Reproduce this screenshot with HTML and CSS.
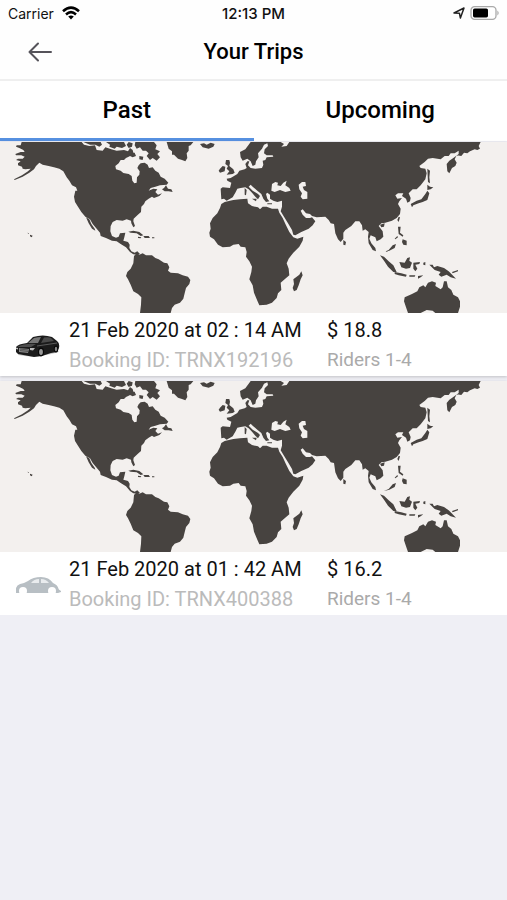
FILE: index.html
```
<!DOCTYPE html>
<html lang="en">
<head>
    <meta charset="UTF-8">
    <meta name="viewport" content="width=device-width, initial-scale=1.0">
    <title>Your Trips</title>
    <link rel="stylesheet" href="styles.css">
</head>
<body>
    <!-- Shared world map, used by every trip card -->
    <svg class="sprite" aria-hidden="true">
        <symbol id="world-map" viewBox="0 12 1521 513" preserveAspectRatio="none">
            <g class="land">
                <!-- North and Central America -->
                <path d="M65 12H245L252 20 268 24 285 22 290 36 308 38 316 28 334 34 350 38 372 36 384 40 390 30 398 36 401 48 386 56 378 60 372 66 362 66 356 76 346 84 348 94 362 98 370 105 386 108 395 114 397 128 403 136 410 134 411 118 418 110 419 100 412 90 416 82 422 76 434 74 443 80 447 90 458 88 466 98 476 104 482 116 494 122 505 134 500 140 480 142 466 146 452 150 446 158 460 152 472 154 466 162 474 170 486 166 478 174 462 180 456 176 446 182 436 190 432 198 424 206 423 222 412 232 401 242 400 250 405 264 400 268 394 256 393 248 380 244 368 248 350 246 338 252 332 264 331 280 336 294 348 299 356 296 360 286 376 284 373 298 370 308 384 312 389 320 388 330 394 340 404 344 412 340 420 348 414 350 400 349 390 342 378 328 362 318 350 310 336 308 318 300 302 294 300 284 290 272 278 258 270 244 256 236 244 222 234 206 225 192 222 176 226 158 232 158 228 148 216 142 208 128 200 118 190 100 178 92 162 88 146 84 128 80 118 74 108 84 102 94 88 104 68 116 44 126 42 124 66 112 84 100 92 92 76 94 68 92 66 86 54 82 54 76 62 70 48 66 54 62 68 62 74 56 64 52 48 52 46 48 62 42 74 42 70 36 58 30 48 26 50 22 62 22Z"/>
                <path d="M258 238L268 244 274 258 284 272 286 278 276 272 266 256Z"/>
                <path d="M492 150L498 142 504 152 514 154 518 162 506 160 494 160 486 154Z"/>
                <!-- Arctic islands -->
                <path d="M250 12H302L306 20 298 26 286 20 270 20ZM318 12H372L378 24 366 30 350 26 344 32 328 26 330 20ZM386 12L398 16 396 26 386 30 380 20ZM406 12H462L470 22 466 34 480 40 472 48 480 58 470 68 458 60 450 66 440 54 446 46 438 38 428 38 420 28 410 32 404 22ZM388 44L404 44 408 54 398 58 390 54ZM418 54L430 56 428 66 418 64Z"/>
                <path d="M500 12H580L572 22 566 24 566 38 560 46 562 60 556 70 546 66 534 62 522 50 516 50 516 40 506 32Z"/>
                <path d="M600 18L612 16 620 20 632 14 644 18 640 26 626 32 608 28Z"/>
                <!-- Caribbean and Hawaii -->
                <path d="M385 281L400 278 418 282 430 292 422 294 410 286 392 284ZM430 294L446 294 450 300 434 300ZM414 296L424 298 422 301 414 300ZM456 298H463V301H456ZM90 290L98 293 95 298 90 295ZM82 284L87 286 86 288Z"/>
                <!-- South America -->
                <path d="M402 354L410 346 418 350 428 346 438 352 456 352 466 360 476 364 492 374 502 376 508 388 504 398 512 404 534 406 548 412 564 416 571 426 568 438 558 450 554 466 550 482 540 494 524 500 516 510 512 525H420L423 500 424 478 414 468 400 460 392 440 384 424 378 414 382 402 392 392 400 376Z"/>
                <!-- Africa -->
                <path d="M674 192L690 188 700 186 720 184 742 182 744 196 756 204 774 208 780 214 788 206 800 206 816 212 834 212 838 224 848 240 858 262 868 282 880 298 892 302 910 296 908 308 898 326 880 344 866 362 860 376 866 392 868 412 854 424 842 434 844 456 834 466 830 480 816 494 800 500 778 502 772 488 762 464 758 442 748 424 754 402 756 386 748 370 738 356 740 342 736 328 722 326 716 318 700 320 690 326 668 328 654 320 642 304 630 296 628 284 632 272 630 256 638 240 652 226 660 210 664 198Z"/>
                <path d="M904 400L908 412 902 424 896 442 890 456 882 460 878 450 882 438 880 424 890 416 898 410Z"/>
                <!-- Europe and Asia -->
                <path d="M752 12H1442L1436 24 1440 32 1432 36 1424 34 1410 40 1402 46 1392 44 1384 54 1370 52 1364 64 1370 74 1366 84 1356 90 1348 106 1342 100 1340 78 1348 68 1360 60 1376 48 1376 38 1364 46 1352 46 1346 54 1334 54 1322 64 1298 60 1284 62 1274 72 1258 84 1262 90 1276 92 1280 106 1276 124 1262 142 1250 154 1238 154 1226 166 1232 180 1230 190 1222 194 1218 182 1206 174 1210 166 1194 166 1186 172 1192 182 1206 180 1198 190 1194 198 1202 212 1200 228 1190 240 1176 248 1156 254 1144 256 1136 264 1148 280 1150 296 1142 304 1130 310 1126 298 1112 292 1108 302 1114 316 1126 330 1128 340 1118 336 1106 316 1104 296 1106 282 1096 274 1088 278 1086 262 1078 250 1066 250 1054 264 1036 276 1030 284 1030 302 1022 312 1014 304 1006 286 1002 258 992 256 986 246 976 236 950 238 936 234 930 228 918 226 908 214 902 218 908 230 918 240 930 240 936 238 946 250 938 262 926 272 904 282 886 292 880 290 876 276 864 256 852 236 842 220 846 206 846 188 832 192 820 188 810 182 810 170 802 164 798 168 802 182 808 190 798 192 790 182 784 168 772 158 758 146 752 140 746 146 758 158 774 168 780 174 774 184 766 176 756 164 746 154 736 148 722 150 712 152 706 164 698 178 680 188 672 182 664 184 662 152 668 148 690 150 694 134 682 128 680 122 692 120 702 114 712 108 718 98 734 94 740 90 736 78 742 70 748 70 744 82 752 90 766 92 786 90 790 80 788 68 796 66 800 58 820 56 818 52 800 52 792 46 794 34 804 24 802 16 792 20 786 32 774 46 776 58 768 70 766 80 758 84 752 70 742 62 728 68 722 58 720 42 736 34 746 20Z"/>
                <path d="M678 66L688 66 690 74 688 84 700 94 704 104 698 108 680 110 688 100 680 92 684 84 676 78ZM660 92L668 84 676 86 674 100 660 104 656 98Z"/>
                <path d="M734 150L740 156 738 172 734 170ZM756 182L770 182 768 190ZM802 196H816V199H802Z"/>
                <!-- Japan, Taiwan, Sri Lanka -->
                <path d="M1282 92L1290 98 1288 118 1290 136 1284 132ZM1282 140L1290 146 1300 148 1292 154 1282 156ZM1282 158L1288 166 1282 186 1268 192 1256 196 1240 202 1236 208 1232 198 1250 188 1264 184 1276 168ZM1196 236L1200 238 1196 252 1192 246ZM1030 306L1038 312 1036 322 1030 320Z"/>
                <!-- South-east Asia and New Guinea -->
                <path d="M1140 260L1154 256 1152 266 1144 268ZM1194 266L1202 266 1200 284 1210 292 1208 296 1196 288ZM1208 304L1220 308 1220 322 1210 320 1206 312ZM1184 302L1192 294 1194 298 1186 304ZM1152 342L1166 336 1178 322 1188 318 1184 330 1168 338ZM1140 352L1152 356 1166 370 1180 382 1190 402 1180 402 1164 386 1152 368ZM1184 402L1204 406 1220 410 1218 416 1196 412 1184 408ZM1228 412L1246 412 1244 416 1228 416ZM1254 414L1270 412 1262 418 1254 422ZM1198 372L1214 374 1222 360 1230 358 1228 368 1236 374 1230 390 1218 392 1204 388ZM1240 374L1260 372 1258 378 1246 380 1252 392 1246 400 1240 392ZM1270 374L1276 372 1276 382 1270 380ZM1288 380L1298 380 1302 388 1312 384 1332 390 1346 400 1352 406 1368 422 1352 418 1340 410 1324 416 1316 410 1322 402 1304 396ZM1356 402L1374 396 1374 400 1358 406Z"/>
                <!-- Australia -->
                <path d="M1224 525L1218 508 1212 490 1214 478 1236 468 1252 460 1258 448 1270 442 1276 448 1284 434 1296 430 1308 434 1306 444 1322 454 1328 448 1332 430 1340 430 1344 448 1354 456 1360 470 1374 478 1380 490 1380 506 1374 525H1306L1298 518 1280 516 1262 525Z"/>
            </g>
            <g class="water">
                <path d="M816 138L826 132 834 134 832 142 842 144 850 134 860 128 856 142 868 150 872 158 856 162 840 156 824 162 814 158Z"/>
                <path d="M896 140L906 132 916 132 918 144 908 146 912 156 922 162 922 182 908 184 902 176 906 166 898 154Z"/>
                <path d="M842 12H868L860 24 844 26 852 18Z"/>
            </g>
        </symbol>
    </svg>

    <header class="header">
        <div class="status-bar">
            <div class="status-left">
                <span>Carrier</span>
                <svg width="18" height="14" viewBox="0 0 18 14" fill="none" stroke="#000" stroke-width="2.6" aria-hidden="true">
                    <path d="M1 5.2Q9-2 17 5.2M4 8.4Q9 4 14 8.4"/>
                    <path d="M9 13.5L6.2 10.6Q9 8.4 11.8 10.6Z" fill="#000" stroke="none"/>
                </svg>
            </div>
            <span class="status-time">12:13 PM</span>
            <div class="status-right">
                <svg width="12" height="12" viewBox="0 0 12 12" fill="none" stroke="#222" stroke-width="1.5" stroke-linejoin="round" aria-hidden="true">
                    <path d="M1 6L11 1 7.4 11 6.4 6.2Z"/>
                </svg>
                <svg width="29" height="14" viewBox="0 0 29 14" aria-hidden="true">
                    <rect x="1" y="0.7" width="25" height="12.6" rx="3.6" fill="#fff" stroke="#a9a9a9" stroke-width="1.3"/>
                    <rect x="3" y="2.6" width="15" height="8.8" rx="1.6"/>
                    <path d="M27.4 4.6Q30 7 27.4 9.4Z" fill="#a9a9a9"/>
                </svg>
            </div>
        </div>
        <div class="title-bar">
            <button type="button" class="back-button" aria-label="Back">
                <svg width="24" height="20" viewBox="0 0 24 20" fill="none" stroke="#55535a" stroke-width="2" stroke-linecap="round" stroke-linejoin="round" aria-hidden="true">
                    <path d="M23 10H1.5M10 1.5L1.5 10 10 18.5"/>
                </svg>
            </button>
            <h1>Your Trips</h1>
        </div>
    </header>

    <nav class="tabs">
        <button type="button" class="tab active">Past</button>
        <button type="button" class="tab">Upcoming</button>
    </nav>

    <main class="trips">
        <article class="trip">
            <svg class="trip-map" role="img" aria-label="Trip map"><use href="#world-map"/></svg>
            <div class="trip-info">
                <svg class="car" width="46" height="24" viewBox="0 0 46 24" aria-hidden="true">
                    <path d="M3 20Q20 24 44 17L42 15 4 17Z" fill="#ccc"/>
                    <path d="M1 12Q3 9 12 8L18 2Q28-1 37 2L42 6Q45 8 44 13L42 17 36 18 27 21 19 22 3 19 1 17Z" fill="#1b1b1b"/>
                    <path d="M13 8L19 3Q23 2 26 2L23 8Z" fill="#777"/>
                    <path d="M26 8L29 2.5Q34 2 36 3L39 6Z" fill="#4a4a4a"/>
                    <path d="M2 12Q10 8 21 9L16 12Z" fill="#4d4d4d"/>
                    <path d="M4 13L14 14 13 18 4 17Z" fill="#888"/>
                    <path d="M5 14L13 15M5 15.5L13 16.5" stroke="#333" stroke-width=".6"/>
                    <path d="M15 13L20 13 18 15.5 15 15ZM1 12.5L3 13 3 14.5 1 14Z" fill="#bbb"/>
                    <path d="M22 11L42 8" stroke="#777" stroke-width=".7"/>
                    <ellipse cx="26" cy="17" rx="3" ry="4.4" fill="#080808"/>
                    <ellipse cx="26" cy="17" rx="1.9" ry="3" fill="#999"/>
                    <ellipse cx="41" cy="14" rx="2.2" ry="3.6" fill="#080808"/>
                    <ellipse cx="41" cy="14" rx="1.2" ry="2.3" fill="#888"/>
                </svg>
                <div class="trip-details">
                    <p class="trip-date">21 Feb 2020 at 02 : 14 AM</p>
                    <p class="trip-booking">Booking ID: TRNX192196</p>
                </div>
                <div class="trip-price">
                    <p>$ 18.8</p>
                    <p class="trip-riders">Riders 1-4</p>
                </div>
            </div>
        </article>

        <article class="trip">
            <svg class="trip-map" role="img" aria-label="Trip map"><use href="#world-map"/></svg>
            <div class="trip-info">
                <svg class="car" width="46" height="20" viewBox="0 0 46 20" aria-hidden="true">
                    <path d="M1 15Q0 8 9 7L13 5Q18 1 26 1Q34 1 38 7Q43 9 43 13L46 15V16L43 17H1Z" fill="#b8bfc4"/>
                    <path d="M16 7Q19 3 24 3V7ZM26 3Q31 3 34 7H26Z" fill="#e9ecee"/>
                    <circle cx="8" cy="15" r="4" fill="#fff"/>
                    <circle cx="37" cy="15" r="4" fill="#fff"/>
                    <path d="M2 15A6 6 0 0 1 14 15M31 15A6 6 0 0 1 43 15" fill="none" stroke="#b8bfc4" stroke-width="2"/>
                </svg>
                <div class="trip-details">
                    <p class="trip-date">21 Feb 2020 at 01 : 42 AM</p>
                    <p class="trip-booking">Booking ID: TRNX400388</p>
                </div>
                <div class="trip-price">
                    <p>$ 16.2</p>
                    <p class="trip-riders">Riders 1-4</p>
                </div>
            </div>
        </article>
    </main>
</body>
</html>
```
FILE: styles.css
```
:root {
    --accent-color: #5690e0;
    --background-color: #efeff5;
    --land-color: #474340;
    --water-color: #f3f0ee;
    --muted-color: #aaa;
}

* {
    box-sizing: border-box;
}

body {
    margin: 0;
    font-family: 'Roboto', sans-serif;
    color: #111;
    background-color: var(--background-color);
}

h1, p {
    margin: 0;
}

button {
    padding: 0;
    border: none;
    background: none;
    font-family: inherit;
    color: #000;
    cursor: pointer;
}

.sprite {
    display: none;
}

.header {
    background-color: #fefefe;
    border-bottom: 2px solid #efefef;
}

.status-bar {
    display: grid;
    grid-template-columns: 1fr auto 1fr;
    align-items: center;
    height: 26px;
    padding: 0 8px;
    font-family: 'Inter', sans-serif;
    font-size: 14px;
}

.status-left, .status-right {
    display: flex;
    align-items: center;
    gap: 8px;
}

.status-right {
    justify-content: flex-end;
    gap: 5px;
}

.status-time {
    font-size: 15px;
    font-weight: 500;
}

.title-bar {
    display: grid;
    grid-template-columns: 80px 1fr 80px;
    align-items: center;
    height: 53px;
    padding-bottom: 2px;
}

.back-button {
    display: flex;
    justify-content: center;
}

h1 {
    font-size: 22px;
    font-weight: 500;
    line-height: 26px;
    text-align: center;
    color: #000;
}

.tabs {
    display: flex;
    background-color: #fff;
}

.tab {
    flex: 1;
    height: 60px;
    border-bottom: 3px solid transparent;
    font-size: 24px;
    font-weight: 500;
}

.tab.active {
    border-bottom-color: var(--accent-color);
}

.trips {
    display: flex;
    flex-direction: column;
    gap: 5px;
    padding-top: 1px;
}

.trip {
    background-color: #fff;
    box-shadow: 0 1px 3px rgba(0, 0, 0, 0.2);
}

.trip-map {
    display: block;
    width: 100%;
    height: 171px;
    background-color: var(--water-color);
}

.land {
    fill: var(--land-color);
}

.water {
    fill: var(--water-color);
}

.trip-info {
    display: grid;
    grid-template-columns: 54px 43fr 30fr;
    align-items: center;
    padding: 2px 0 1px 15px;
    font-size: 20px;
    line-height: 30px;
    white-space: nowrap;
}

.car {
    margin-top: 4px;
}

.trip-booking {
    color: #bbb;
}

.trip-riders {
    font-size: 19px;
    color: var(--muted-color);
}
```
